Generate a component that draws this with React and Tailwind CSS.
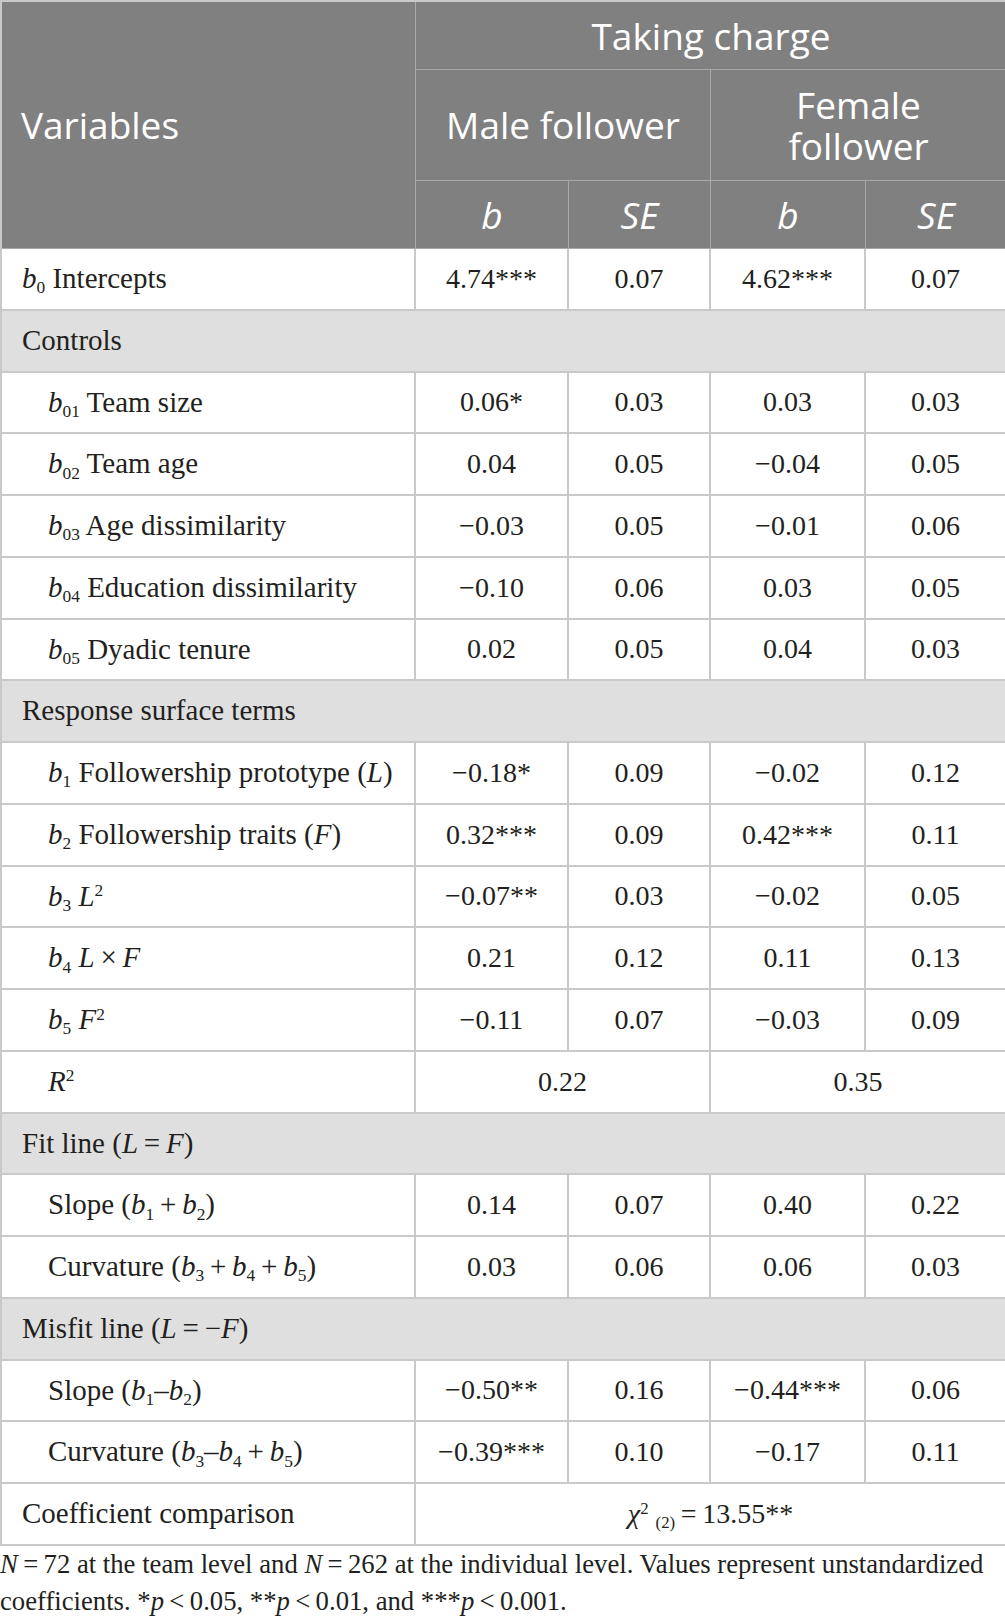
import React from "react";

const I = ({ children }) => <span className="italic">{children}</span>;
const Sub = ({ children }) => (
  <span className="relative top-[0.3em] text-[0.6em] leading-none">{children}</span>
);
const Sup = ({ children }) => (
  <span className="relative -top-[0.55em] text-[0.6em] leading-none">{children}</span>
);
const B = ({ n }) => (
  <>
    <I>b</I>
    <Sub>{n}</Sub>
  </>
);
const eq = "\u2009=\u2009";
const pl = "\u2009+\u2009";

const rows = [
  { label: <><B n="0" /> Intercepts</>, vals: ["4.74***", "0.07", "4.62***", "0.07"] },
  { section: "Controls" },
  { indent: true, label: <><B n="01" /> Team size</>, vals: ["0.06*", "0.03", "0.03", "0.03"] },
  { indent: true, label: <><B n="02" /> Team age</>, vals: ["0.04", "0.05", "\u22120.04", "0.05"] },
  { indent: true, label: <><B n="03" /> Age dissimilarity</>, vals: ["\u22120.03", "0.05", "\u22120.01", "0.06"] },
  { indent: true, label: <><B n="04" /> Education dissimilarity</>, vals: ["\u22120.10", "0.06", "0.03", "0.05"] },
  { indent: true, label: <><B n="05" /> Dyadic tenure</>, vals: ["0.02", "0.05", "0.04", "0.03"] },
  { section: "Response surface terms" },
  { indent: true, label: <><B n="1" /> Followership prototype (<I>L</I>)</>, vals: ["\u22120.18*", "0.09", "\u22120.02", "0.12"] },
  { indent: true, label: <><B n="2" /> Followership traits (<I>F</I>)</>, vals: ["0.32***", "0.09", "0.42***", "0.11"] },
  { indent: true, label: <><B n="3" /> <I>L</I><Sup>2</Sup></>, vals: ["\u22120.07**", "0.03", "\u22120.02", "0.05"] },
  { indent: true, label: <><B n="4" /> <I>L</I>{"\u2009\u00d7\u2009"}<I>F</I></>, vals: ["0.21", "0.12", "0.11", "0.13"] },
  { indent: true, label: <><B n="5" /> <I>F</I><Sup>2</Sup></>, vals: ["\u22120.11", "0.07", "\u22120.03", "0.09"] },
  { indent: true, label: <><I>R</I><Sup>2</Sup></>, pair: ["0.22", "0.35"] },
  { section: <>Fit line (<I>L</I>{eq}<I>F</I>)</> },
  { indent: true, label: <>Slope (<B n="1" />{pl}<B n="2" />)</>, vals: ["0.14", "0.07", "0.40", "0.22"] },
  { indent: true, label: <>Curvature (<B n="3" />{pl}<B n="4" />{pl}<B n="5" />)</>, vals: ["0.03", "0.06", "0.06", "0.03"] },
  { section: <>Misfit line (<I>L</I>{eq}{"\u2212"}<I>F</I>)</> },
  { indent: true, label: <>Slope (<B n="1" />{"\u2013"}<B n="2" />)</>, vals: ["\u22120.50**", "0.16", "\u22120.44***", "0.06"] },
  { indent: true, label: <>Curvature (<B n="3" />{"\u2013"}<B n="4" />{pl}<B n="5" />)</>, vals: ["\u22120.39***", "0.10", "\u22120.17", "0.11"] },
  {
    label: <>Coefficient comparison</>,
    full: (
      <>
        <I>{"\u03c7"}</I>
        <Sup>2</Sup>
        {" "}
        <Sub>(2)</Sub>
        {eq}13.55**
      </>
    ),
  },
];

const hd = "border-r border-b border-[#a9a9a9] flex items-center justify-center text-white";
const cell = "border-r-2 border-b-2 border-[#c9c9c9] flex items-center";
const sans = { fontFamily: '"Open Sans", sans-serif' };

export default function App() {
  return (
    <div className="w-[1005px] bg-white text-[#231f20]">
      <div
        className="grid grid-cols-[414px_153px_142px_155px_141px] grid-rows-[68px_111px_68px_repeat(21,61.76px)] border-l-2 border-t-2 border-[#c9c9c9] bg-white"
        style={{ fontFamily: '"Liberation Serif", "Times New Roman", serif' }}
      >
        <div
          className="row-span-3 bg-[#808080] border-r border-b border-[#a9a9a9] flex items-center pl-[19px] text-white text-[37px]"
          style={sans}
        >
          Variables
        </div>
        <div className={`col-span-4 bg-[#808080] ${hd} text-[37px]`} style={sans}>
          Taking charge
        </div>
        <div className={`col-span-2 bg-[#808080] ${hd} text-[37px]`} style={sans}>
          Male follower
        </div>
        <div className={`col-span-2 bg-[#808080] ${hd} flex-col text-[37px] text-center`} style={sans}>
          <span className="block leading-[41px] h-[41px]">Female</span>
          <span className="block leading-[41px] h-[41px]">follower</span>
        </div>
        {["b", "SE", "b", "SE"].map((t, i) => (
          <div key={i} className={`bg-[#808080] ${hd} text-[37px] italic`} style={sans}>
            {t}
          </div>
        ))}

        {rows.map((r, idx) => {
          if (r.section) {
            return (
              <div key={idx} className={`col-span-5 bg-[#e0dfe0] ${cell} pl-[20px] text-[29px]`}>
                <span>{r.section}</span>
              </div>
            );
          }
          const label = (
            <div key={`l${idx}`} className={`${cell} ${r.indent ? "pl-[46px]" : "pl-[20px]"} text-[29px] whitespace-nowrap`}>
              <span>{r.label}</span>
            </div>
          );
          if (r.pair) {
            return (
              <React.Fragment key={idx}>
                {label}
                {r.pair.map((v, j) => (
                  <div key={j} className={`col-span-2 ${cell} justify-center text-[28px]`}>
                    {v}
                  </div>
                ))}
              </React.Fragment>
            );
          }
          if (r.full) {
            return (
              <React.Fragment key={idx}>
                {label}
                <div className={`col-span-4 ${cell} justify-center text-[28px] whitespace-nowrap`}>
                  <span>{r.full}</span>
                </div>
              </React.Fragment>
            );
          }
          return (
            <React.Fragment key={idx}>
              {label}
              {r.vals.map((v, j) => (
                <div key={j} className={`${cell} justify-center text-[28px] whitespace-nowrap`}>
                  {v}
                </div>
              ))}
            </React.Fragment>
          );
        })}
      </div>
      <div
        className="text-[26.7px] leading-[37px] whitespace-nowrap"
        style={{ fontFamily: '"Liberation Serif", "Times New Roman", serif' }}
      >
        <I>N</I>
        {eq}72 at the team level and <I>N</I>
        {eq}262 at the individual level. Values represent unstandardized
        <br />
        coefficients. *<I>p</I>
        {"\u2009<\u2009"}0.05, **<I>p</I>
        {"\u2009<\u2009"}0.01, and ***<I>p</I>
        {"\u2009<\u2009"}0.001.
      </div>
    </div>
  );
}
